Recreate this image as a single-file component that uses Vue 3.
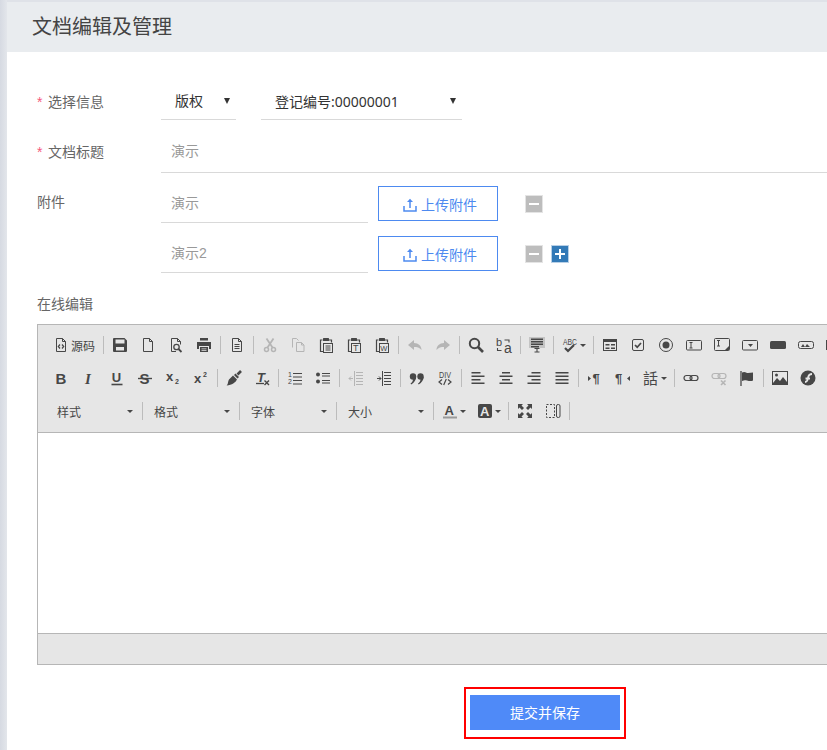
<template>
  <div class="page">
    <div class="strip"></div>
    <div class="main">
      <div class="head">文档编辑及管理</div>
      <div class="form">
        <div class="row row-select">
          <label class="lbl"><i>*</i>选择信息</label>
          <div class="select small">版权<b class="tri"></b></div>
          <div class="select wide">登记编号:00000001<b class="tri"></b></div>
        </div>
        <div class="row row-title">
          <label class="lbl"><i>*</i>文档标题</label>
          <div class="title-input">演示</div>
        </div>
        <div class="attach">
          <label class="lbl plain">附件</label>
          <div>
            <div v-for="(a, i) in attachments" :key="a" class="attach-row">
              <div class="attach-input">{{ a }}</div>
              <button class="upload">
                <svg width="14" height="14" viewBox="0 0 14 14" fill="none" stroke="#4d8af0" stroke-width="1.5">
                  <path d="M1 8v5h12V8" />
                  <path d="M7 10V2" />
                  <path d="M7 .8 10 4H4z" fill="#4d8af0" stroke="none" />
                </svg>
                上传附件
              </button>
              <span class="sq minus"></span>
              <span v-if="i === attachments.length - 1" class="sq plus"></span>
            </div>
          </div>
        </div>
        <div class="lbl plain online">在线编辑</div>
        <div class="editor">
          <div class="toolbar">
            <div v-for="(tools, r) in toolbar" :key="r" class="tool-row">
              <template v-for="(t, j) in tools" :key="j">
                <span v-if="t === '|'" class="sep"></span>
                <span v-else-if="t.combo" class="combo">{{ t.combo }}<b class="mini"></b></span>
                <span v-else :class="['tool', { off: t.off, arrow: t.arrow, src: t.label }]">
                  <svg class="ico" width="16" height="16" viewBox="0 0 16 16" fill="none" stroke="#474747" v-html="icons[t.i]"></svg>
                  <em v-if="t.label">{{ t.label }}</em>
                  <b v-if="t.arrow" class="mini"></b>
                </span>
              </template>
            </div>
          </div>
          <div class="body"></div>
          <div class="status"></div>
        </div>
        <div class="mark">
          <button class="submit">提交并保存</button>
        </div>
      </div>
    </div>
  </div>
</template>

<script setup>
const attachments = ['演示', '演示2']

const fill = 'fill="#474747" stroke="none"'
const txt = (s, x, y, size, extra = '') =>
  `<text x="${x}" y="${y}" font-size="${size}" fill="#474747" stroke="none" font-family="Liberation Sans, Noto Sans CJK SC, sans-serif" ${extra}>${s}</text>`
const doc = '<path d="M3.5 1.5h6l3 3v10h-9zM9.5 1.5v3h3"/>'
const board = '<path d="M4.5 3H2.5v11.5H5M11 3h2.5v2.5" stroke-width="1.2"/><rect x="5" y="1" width="6" height="3" rx=".5" ' + fill + '/><rect x="5.5" y="6.5" width="9" height="9"/>'
const lines = (rows) => `<path ${fill} d="${rows.map(([x, y, w]) => `M${x} ${y}h${w}v1.6h-${w}z`).join('')}"/>`

const icons = {
  source: doc + '<path d="M7 7.5 5.3 9.5 7 11.5M9 7.5l1.7 2L9 11.5" stroke-width="1.2"/>',
  save: `<path ${fill} fill-rule="evenodd" d="M2 1h10.5L15 3.5V14a1 1 0 0 1-1 1H2a1 1 0 0 1-1-1V2a1 1 0 0 1 1-1zM3.5 2.5v4h9v-4zM4 10v3.5h8V10z"/>`,
  newpage: doc,
  preview: '<path d="M8 14.5H3.5v-13h6l3 3v3M9.5 1.5v3h3"/><circle cx="8.5" cy="10" r="2.7" stroke-width="1.3"/><path d="M10.5 12l3 3" stroke-width="1.8"/>',
  print: `<path ${fill} d="M4 1h8v2.5H4zM1 5h14v7h-2V9H3v3H1z"/><path ${fill} fill-rule="evenodd" d="M4 10h8v5H4zM5.5 11.5v.8h5v-.8zM5.5 13v.8h5V13z"/>`,
  templates: doc + '<path d="M5.5 7.5h5M5.5 9.5h5M5.5 11.5h5"/>',
  cut: '<circle cx="4.5" cy="12.5" r="2" stroke-width="1.5"/><circle cx="11.5" cy="12.5" r="2" stroke-width="1.5"/><path d="M5.5 10.5 11.5 1.5M10.5 10.5 4.5 1.5" stroke-width="1.8"/>',
  copy: '<path d="M2.5 10.5v-9h4l2 2"/><path d="M6.5 5.5h5l2.5 2.5v6.5H6.5zM11.5 5.5V8H14"/>',
  paste: board + '<path d="M7.5 9h5M7.5 11h5M7.5 13h5"/>',
  pastetext: board + txt('T', 7, 14, 9),
  pasteword: board + txt('W', 6.3, 14, 7.5),
  undo: `<path ${fill} d="M7 3 1 8l6 5v-3c3 0 5.5.5 7.5 3 0-4-3-7-7.5-7z"/>`,
  redo: `<path ${fill} d="M9 3l6 5-6 5v-3c-3 0-5.5.5-7.5 3 0-4 3-7 7.5-7z"/>`,
  find: '<circle cx="6.5" cy="6.5" r="4.7" stroke-width="2"/><path d="M10 10l5 5" stroke-width="2.6"/>',
  replace: txt('b', 0, 8.5, 11) + txt('a', 8, 15.5, 14) + '<path d="M1.5 11v2.5h4M8.5 3H13v2.5" stroke-width="1.1"/>',
  selectall: '<rect x="0" y="0" width="16" height="11" fill="#c4c4c4" stroke="none"/>' + lines([[2, 1.5, 12], [2, 4, 12], [2, 6.5, 12], [2, 9, 8]]) + '<path d="M5.5 11.5h5M8 11.5V15M5.5 15h5" stroke-width="1.1"/>',
  spell: txt('ABC', 1, 7.5, 9.5, 'textLength="14" lengthAdjust="spacingAndGlyphs"') + '<path d="M3 11l3 3 6-6" stroke-width="2.2"/>',
  form: `<rect x="1.5" y="2.5" width="13" height="11"/><path ${fill} d="M2 3h12v2H2zM3.5 7h4v1.6h-4zM9 7h4v1.6H9zM3.5 10.5h4v1.6h-4zM9 10.5h4v1.6H9z"/>`,
  checkbox: '<rect x="2.5" y="2.5" width="11" height="11" rx="1.5"/><path d="M5 8l2.2 2.2L11 6" stroke-width="1.7"/>',
  radio: `<circle cx="8" cy="8" r="6.5"/><circle cx="8" cy="8" r="3.5" ${fill}/>`,
  textfield: '<rect x=".5" y="3.5" width="15" height="9.5" rx="1"/><path d="M3.5 5.5h3M5 5.5v5.5M3.5 11h3"/>',
  textarea: `<rect x=".5" y="1.5" width="15" height="12" rx="1"/><path d="M3 3.5h3M4.5 3.5V9M3 9h3"/><path ${fill} d="M15 9v4h-4z"/>`,
  selectbox: `<rect x=".5" y="3.5" width="15" height="9.5" rx="1"/><path ${fill} d="M6 7h5l-2.500 3z"/>`,
  btn: `<rect x="0" y="4" width="16" height="8" rx="1.5" ${fill}/>`,
  imagebtn: `<rect x=".5" y="4.5" width="15" height="7" rx="2"/><path ${fill} d="M3 10l2-3 2 3 2-3 3 3z"/>`,
  hidden: `<rect x="0" y="3" width="16" height="10" ${fill}/>`,
  bold: txt('B', 2.5, 13.5, 15, 'font-weight="700"'),
  italic: '<text x="4" y="13.5" font-size="15" font-weight="700" font-style="italic" fill="#474747" stroke="none" font-family="Liberation Serif, serif">I</text>',
  underline: txt('U', 2.8, 11.5, 13, 'font-weight="700"') + '<path d="M2.5 14.5h11" stroke-width="1.6"/>',
  strike: txt('S', 2.5, 13.5, 15, 'font-weight="700"') + '<path d="M1 8.5h14" stroke-width="1.4"/>',
  sub: txt('x', 1, 11, 13, 'font-weight="700"') + txt('2', 10, 14, 7, 'font-weight="700"'),
  sup: txt('x', 1, 13, 13, 'font-weight="700"') + txt('2', 10, 7, 7, 'font-weight="700"'),
  brush: `<path ${fill} d="M9.5 3.5 13 7l-1.500 1.500L8 5zM7 5.500l4 4C9.500 12.500 6 15 .5 15.500c2-1.500 1-3 2.500-6z"/><path d="M11.500 4.500 15 1" stroke-width="2.6"/>`,
  removeformat: txt('T', 3, 11.5, 13, 'font-weight="700" font-style="italic"') + '<path d="M2 13.5h8" stroke-width="1.3"/><path d="M10.5 10.5l4.5 4.5M15 10.5 10.5 15" stroke-width="1.4"/>',
  ol: txt('1', 1, 7, 7) + txt('2', 1, 14, 7) + '<path d="M6 3.5h9M6 7h9M6 10.5h9M6 14h9" stroke-width="1.1"/>',
  ul: `<circle cx="3" cy="4.5" r="2" ${fill}/><circle cx="3" cy="11.5" r="2" ${fill}/><path d="M7 3.5h8M7 6h8M7 10.5h8M7 13h8" stroke-width="1.1"/>`,
  outdent: '<path d="M8 2.5h7M8 5.5h7M8 8.5h7M8 11.5h7M8 14.5h7M6.5 1v15" stroke-width="1"/><path d="M1 8.5h4M3 6.5l-2 2 2 2" stroke-width="1"/>',
  indent: '<path d="M8 2.5h7M8 5.5h7M8 8.5h7M8 11.5h7M8 14.5h7M6.5 1v15" stroke-width="1"/><path d="M1 8.5h4M3 6.5l2 2-2 2" stroke-width="1"/>',
  quote: `<circle cx="4" cy="6.5" r="3.2" ${fill}/><path ${fill} d="M7.2 6.5c0 3.500-2 6-5 8l-.7-1c1.500-1 2.500-2.500 2.500-4z"/><circle cx="11.5" cy="6.5" r="3.2" ${fill}/><path ${fill} d="M14.700 6.500c0 3.500-2 6-5 8l-.7-1c1.500-1 2.500-2.500 2.500-4z"/>`,
  div: txt('DIV', 2, 7.5, 9.5, 'textLength="12" lengthAdjust="spacingAndGlyphs"') + '<path d="M5 9.5 2 12l3 2.5M11 9.5l3 2.5-3 2.5M9.3 9l-2.600 6" stroke-width="1.2"/>',
  left: lines([[1.5, 2, 9], [1.5, 5.5, 13], [1.5, 9, 9], [1.5, 12.5, 13]]),
  center: lines([[4, 2, 8], [1.5, 5.5, 13], [4, 9, 8], [1.5, 12.5, 13]]),
  right: lines([[5.5, 2, 9], [1.5, 5.5, 13], [5.5, 9, 9], [1.5, 12.5, 13]]),
  justify: lines([[1.5, 2, 13], [1.5, 5.5, 13], [1.5, 9, 13], [1.5, 12.5, 13]]),
  ltr: `<path ${fill} d="M1 6l3 2.5L1 11z"/>` + txt('¶', 5.5, 13, 13, 'font-weight="700"'),
  rtl: `<path ${fill} d="M15 6l-3 2.5 3 2.5z"/>` + txt('¶', 0, 13, 13, 'font-weight="700"'),
  lang: txt('話', 0, 14, 15),
  link: '<rect x="1" y="5.5" width="8" height="5" rx="2.5" stroke-width="1.2"/><rect x="7" y="5.5" width="8" height="5" rx="2.5" stroke-width="1.2"/>',
  unlink: '<rect x="1" y="3.5" width="8" height="5" rx="2.5" stroke-width="1.2"/><rect x="7" y="3.5" width="8" height="5" rx="2.5" stroke-width="1.2"/><path d="M10 10.5l4.5 4.5M14.5 10.5 10 15" stroke-width="1.6"/>',
  anchor: `<path d="M2 1v15" stroke-width="1.3"/><path ${fill} d="M3 2.5c3-1.500 4 .5 6 .5l5-.5v8c-2 1-4 .5-6 0-2-.5-3-.5-5 .5z"/>`,
  image: `<rect x=".5" y="1.5" width="15" height="13"/><path ${fill} d="M1 13l4-5 3 3 3-4 4 5v2H1z"/><circle cx="4.5" cy="5" r="1.5" ${fill}/>`,
  flash: `<circle cx="8" cy="8" r="7.5" ${fill}/><path d="M5 12c3 0 2.500-2.500 3.200-5S10 4 12 4M5.500 8.500h4.500" stroke="#e6e6e6" stroke-width="1.8"/>`,
  color: txt('A', 2.5, 11.5, 13, 'font-weight="700"') + '<path d="M1 14.5h14" stroke="#9a9a9a" stroke-width="2"/>',
  bgcolor: '<rect x="1" y="1" width="14" height="14" rx="2" fill="#474747" stroke="none"/><text x="3" y="12.5" font-size="13" font-weight="700" fill="#e6e6e6" stroke="none" font-family="Liberation Sans, sans-serif">A</text>',
  maximize: `<path ${fill} d="M1 1h5L4.500 2.500 7 5 5 7 2.500 4.500 1 6zM15 1v5l-1.500-1.500L11 7 9 5l2.500-2.500L10 1zM1 15v-5l1.500 1.500L5 9l2 2-2.500 2.500L6 15zM15 15h-5l1.500-1.500L9 11l2-2 2.500 2.500L15 10z"/>`,
  blocks: '<path d="M1.5 1.5h8v13h-8z" stroke-dasharray="2 1.5"/><rect x="11.5" y="1.5" width="3.5" height="13" rx="1.5"/>',
}

const tool = (i) => ({ i })
const off = (i) => ({ i, off: true })
const drop = (i) => ({ i, arrow: true })

const toolbar = [
  [
    { i: 'source', label: '源码' }, '|',
    tool('save'), tool('newpage'), tool('preview'), tool('print'), '|',
    tool('templates'), '|',
    off('cut'), off('copy'), tool('paste'), tool('pastetext'), tool('pasteword'), '|',
    off('undo'), off('redo'), '|',
    tool('find'), tool('replace'), '|',
    tool('selectall'), '|',
    drop('spell'), '|',
    tool('form'), tool('checkbox'), tool('radio'), tool('textfield'), tool('textarea'),
    tool('selectbox'), tool('btn'), tool('imagebtn'), tool('hidden'),
  ],
  [
    tool('bold'), tool('italic'), tool('underline'), tool('strike'), tool('sub'), tool('sup'), '|',
    tool('brush'), tool('removeformat'), '|',
    tool('ol'), tool('ul'), '|',
    off('outdent'), tool('indent'), '|',
    tool('quote'), tool('div'), '|',
    tool('left'), tool('center'), tool('right'), tool('justify'), '|',
    tool('ltr'), tool('rtl'), drop('lang'), '|',
    tool('link'), off('unlink'), tool('anchor'), '|',
    tool('image'), tool('flash'),
  ],
  [
    { combo: '样式' }, '|', { combo: '格式' }, '|', { combo: '字体' }, '|', { combo: '大小' }, '|',
    drop('color'), drop('bgcolor'), '|',
    tool('maximize'), tool('blocks'), '|',
  ],
]
</script>

<style scoped>
.page {
  display: flex;
  width: 827px;
  height: 750px;
  overflow: hidden;
  background: #fff;
  font-family: "Liberation Sans", "Noto Sans CJK SC", sans-serif;
  font-size: 14px;
}

.strip {
  width: 7px;
  flex: none;
  background: linear-gradient(90deg, #d6dae2, #e3e6eb);
}

.main {
  flex: 1;
  min-width: 0;
}

.head {
  height: 50px;
  margin-top: 2px;
  padding-left: 25px;
  background: #e9ecef;
  color: #444;
  font-size: 20px;
  line-height: 51px;
  box-shadow: 0 -2px 0 #dfe2e8;
}

.form {
  padding-left: 30px;
}

.row {
  display: flex;
  align-items: center;
}

.row .lbl {
  margin-bottom: 3px;
}

.row-title .lbl {
  margin-bottom: 5px;
}

.lbl {
  width: 124px;
  flex: none;
  color: #666;
  white-space: nowrap;
}

.lbl i {
  display: inline-block;
  width: 11px;
  color: #f5587b;
  font-style: normal;
}

.plain {
  display: block;
}

.row-select {
  margin-top: 32px;
  height: 36px;
}

.select {
  position: relative;
  height: 36px;
  box-sizing: border-box;
  padding-left: 14px;
  border-bottom: 1px solid #d9d9d9;
  color: #333;
  line-height: 35px;
}

.small {
  width: 75px;
  margin-right: 25px;
}

.wide {
  width: 201px;
  font-family: "Noto Sans", "Noto Sans CJK SC", sans-serif;
}

.tri {
  position: absolute;
  right: 6px;
  top: 14px;
  border-top: 6px solid #333;
  border-left: 3px solid transparent;
  border-right: 3px solid transparent;
}

.row-title {
  margin-top: 13px;
  height: 40px;
}

.title-input {
  flex: 1;
  height: 40px;
  box-sizing: border-box;
  padding-left: 10px;
  border-bottom: 1px solid #d9d9d9;
  color: #999;
  line-height: 37px;
}

.attach {
  display: flex;
  margin-top: 11px;
}

.attach .lbl {
  line-height: 36px;
}

.attach-row {
  display: flex;
  align-items: center;
  height: 39px;
  margin-bottom: 11px;
}

.attach-input {
  width: 207px;
  height: 39px;
  box-sizing: border-box;
  padding-left: 10px;
  border-bottom: 1px solid #d9d9d9;
  color: #999;
  line-height: 38px;
}

.upload {
  display: flex;
  align-items: center;
  justify-content: center;
  gap: 4px;
  width: 120px;
  height: 35px;
  margin-left: 10px;
  padding: 0 0 0 4px;
  border: 1px solid #4d8af0;
  background: #fff;
  color: #4d8af0;
  font: inherit;
}

.upload svg {
  margin-top: 2px;
}

.sq {
  position: relative;
  width: 18px;
  height: 18px;
  box-sizing: border-box;
  margin-left: 27px;
  border: 1px solid #e4e4e4;
  background: #bdbdbd;
}

.sq::before {
  content: "";
  position: absolute;
  left: 3px;
  right: 3px;
  top: 7px;
  height: 2px;
  background: #fff;
}

.plus {
  margin-left: 8px;
  border-color: #b9d0e6;
  background: #337ab7;
}

.plus::after {
  content: "";
  position: absolute;
  top: 3px;
  bottom: 3px;
  left: 7px;
  width: 2px;
  background: #fff;
}

.online {
  margin-top: 10px;
  line-height: 20px;
}

.editor {
  width: 900px;
  margin-top: 10px;
  border: 1px solid #b6b6b6;
}

.toolbar {
  box-sizing: border-box;
  height: 108px;
  padding: 6px 0 0 9px;
  background: #e6e6e6;
  border-bottom: 1px solid #b6b6b6;
}

.tool-row {
  display: flex;
  align-items: center;
  height: 28px;
  margin-bottom: 5px;
}

.tool-row:last-child {
  margin-left: -1px;
}

.tool {
  display: flex;
  align-items: center;
  gap: 2px;
  box-sizing: border-box;
  width: 28px;
  height: 28px;
  padding: 0 6px;
  flex: none;
}

.ico {
  overflow: visible;
  flex: none;
}

.tool em {
  color: #474747;
  font-size: 12px;
  font-style: normal;
  white-space: nowrap;
}

.src {
  width: 54px;
}

.arrow {
  width: 35px;
}

.off svg {
  opacity: 0.3;
}

.sep {
  width: 1px;
  height: 18px;
  flex: none;
  margin: 0 2px;
  background: #bcbcbc;
}

.combo {
  display: flex;
  align-items: center;
  justify-content: space-between;
  box-sizing: border-box;
  width: 96px;
  padding: 0 9px 0 11px;
  flex: none;
  color: #474747;
  font-size: 12px;
}

.combo + .sep {
  margin-left: 0;
  margin-right: 0;
}

.combo + .sep:nth-child(8) {
  margin-right: 2px;
}

.mini {
  flex: none;
  border-top: 3px solid #474747;
  border-left: 3px solid transparent;
  border-right: 3px solid transparent;
}

.body {
  height: 200px;
  background: #fff;
}

.status {
  height: 30px;
  background: #e6e6e6;
  border-top: 1px solid #b6b6b6;
}

.mark {
  width: 162px;
  height: 52px;
  box-sizing: border-box;
  margin: 22px 0 0 427px;
  padding: 6px 4px 0;
  border: 2px solid #f00;
}

.submit {
  display: block;
  width: 150px;
  height: 35px;
  padding: 0 0 2px;
  border: 0;
  background: #4f8af8;
  color: #fff;
  font: inherit;
}
</style>

<style>
html, body {
  overflow: hidden;
}
</style>
